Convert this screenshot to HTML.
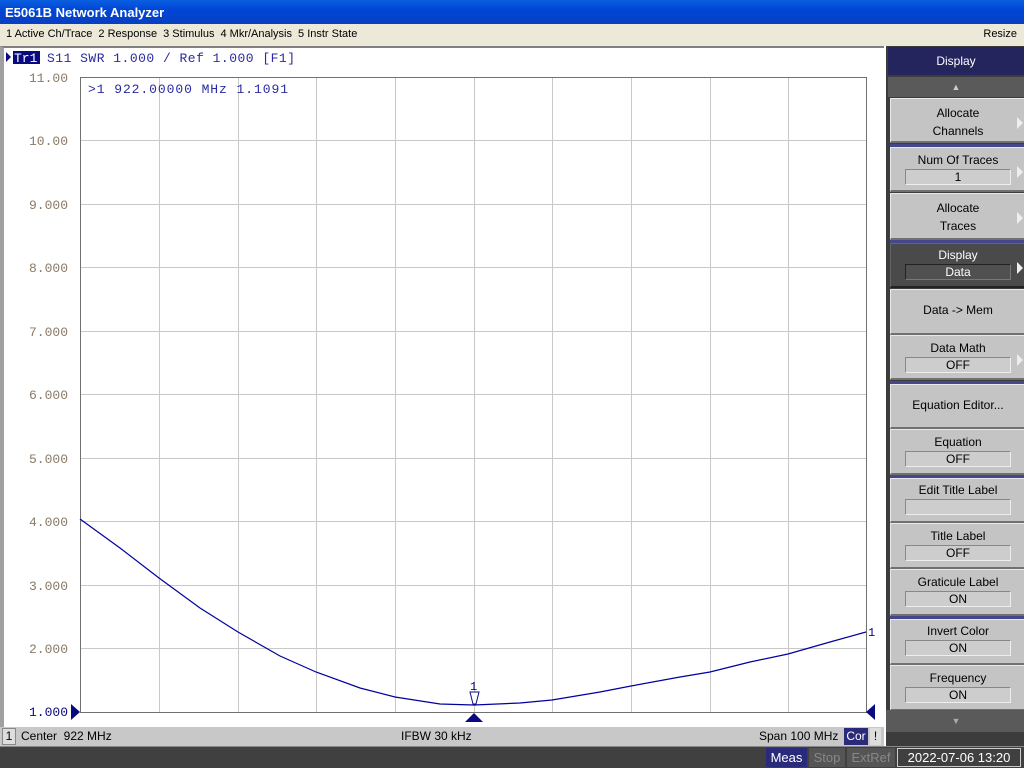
<!DOCTYPE html><html><head><style>
*{margin:0;padding:0;box-sizing:border-box}
body{width:1024px;height:768px;overflow:hidden;background:#ece9d8;font-family:"Liberation Sans",sans-serif;position:relative}
.a{position:absolute}
#title{left:0;top:0;width:1024px;height:24px;background:linear-gradient(#0a5fe0,#0046d5 40%,#0a3fc0);color:#fff;font-weight:bold;font-size:13px;line-height:25px;padding-left:5px}
#menu{left:0;top:24px;width:1024px;height:21px;background:#ece9d8;font-size:11px;line-height:21px;color:#000}
#menu span{margin-left:6px;margin-right:0}
#chart{left:0;top:46px;width:885px;height:682px;background:#fff;border-left:4px solid #a0a0a0;border-top:2px solid #808080}
#sk{left:884px;top:46px;width:140px;height:700px;background:#3c3c3c;border-left:2px solid #fff}
.btn{position:absolute;left:4px;width:136px;background:#c4c4c4;border-top:1px solid #e8e8e8;border-left:1px solid #e8e8e8;border-bottom:2px solid #707070;border-right:1px solid #808080;font-size:12px;color:#000;text-align:center}
.v{margin:2px auto 0;width:106px;height:16px;background:#cdcdcd;border:1px solid #888;border-right-color:#eee;border-bottom-color:#eee;line-height:14px}
.arr{position:absolute;right:2px;top:18px;width:0;height:0;border-left:6px solid #eee;border-top:6px solid transparent;border-bottom:6px solid transparent}
.sep{position:absolute;left:4px;width:136px;height:3px;background:#46468a}
#stat{left:0;top:727px;width:885px;height:19px;background:#c8c8c8;font-size:12px;line-height:19px}
#bot{left:0;top:746px;width:1024px;height:22px;background:#404040;border-top:1px solid #888}
</style></head><body>
<div id="title" class="a">E5061B Network Analyzer</div>
<div id="menu" class="a"><span>1 Active Ch/Trace</span><span>2 Response</span><span>3 Stimulus</span><span>4 Mkr/Analysis</span><span>5 Instr State</span><span style="position:absolute;right:7px">Resize</span></div>
<div id="chart" class="a"></div>
<svg class="a" style="left:0;top:46px" width="885" height="682" viewBox="0 46 885 682">
<g stroke="#c8c8c8" stroke-width="1">
<line x1="80" y1="140.5" x2="866" y2="140.5"/><line x1="80" y1="204.5" x2="866" y2="204.5"/><line x1="80" y1="267.5" x2="866" y2="267.5"/><line x1="80" y1="331.5" x2="866" y2="331.5"/><line x1="80" y1="394.5" x2="866" y2="394.5"/><line x1="80" y1="458.5" x2="866" y2="458.5"/><line x1="80" y1="521.5" x2="866" y2="521.5"/><line x1="80" y1="585.5" x2="866" y2="585.5"/><line x1="80" y1="648.5" x2="866" y2="648.5"/>
<line x1="159.5" y1="77" x2="159.5" y2="712"/><line x1="238.5" y1="77" x2="238.5" y2="712"/><line x1="316.5" y1="77" x2="316.5" y2="712"/><line x1="395.5" y1="77" x2="395.5" y2="712"/><line x1="474.5" y1="77" x2="474.5" y2="712"/><line x1="552.5" y1="77" x2="552.5" y2="712"/><line x1="631.5" y1="77" x2="631.5" y2="712"/><line x1="710.5" y1="77" x2="710.5" y2="712"/><line x1="788.5" y1="77" x2="788.5" y2="712"/>
</g>
<rect x="80.5" y="77.5" width="786" height="635" fill="none" stroke="#707070"/>
<polyline fill="none" stroke="#0000a0" stroke-width="1.2" points="80,519 120,548 159,578 200,608 238,632 280,656 316,672 360,688 395,697 440,704 474,705 520,703 552,700 600,692 631,686 680,677 710,672 750,662 788,654 830,642 866,632"/>
<g fill="#0a0a80"><polygon points="71,704 80,712 71,720"/><polygon points="875,704 866,712 875,720"/><polygon points="465,722 474,713 483,722"/></g>
<polygon points="470,692 479,692 476,704 473,704" fill="#fff" stroke="#0a0a80"/>
<text x="470" y="690" font-family="Liberation Mono" font-size="12" fill="#0a0a80">1</text>
<text x="868" y="636" font-family="Liberation Mono" font-size="12" fill="#0a0a80">1</text>
<g font-family="Liberation Mono" font-size="13" fill="#8a7a66" text-anchor="end">
<text x="68" y="82">11.00</text><text x="68" y="145">10.00</text><text x="68" y="209">9.000</text><text x="68" y="272">8.000</text><text x="68" y="336">7.000</text><text x="68" y="399">6.000</text><text x="68" y="463">5.000</text><text x="68" y="526">4.000</text><text x="68" y="590">3.000</text><text x="68" y="653">2.000</text><text x="68" y="716" fill="#0a0a80">1.000</text></g>
<polygon points="6,52 11,57 6,62" fill="#0a0a80"/>
<rect x="13" y="51" width="27" height="13" fill="#0a0a80"/>
<g font-family="Liberation Mono" font-size="13" fill="#2a2aa0" xml:space="preserve"><text x="14" y="62" fill="#fff">Tr1</text><text x="47" y="62" textLength="248">S11 SWR 1.000 / Ref 1.000  [F1]</text>
<text x="88" y="93" textLength="200">&gt;1  922.00000 MHz  1.1091</text></g>
</svg>
<div id="stat" class="a"><span style="position:absolute;left:2px;top:1px;height:17px;width:14px;background:#ddd;border:1px solid #888;line-height:15px;text-align:center">1</span><span style="position:absolute;left:21px">Center&nbsp; 922 MHz</span><span style="position:absolute;left:401px">IFBW 30 kHz</span><span style="position:absolute;left:759px">Span 100 MHz</span><span style="position:absolute;left:844px;top:1px;height:17px;width:24px;background:#2a2a7a;color:#fff;line-height:17px;text-align:center">Cor</span><span style="position:absolute;left:870px;top:1px;height:17px;width:11px;background:#ddd;line-height:17px;text-align:center">!</span></div>
<div id="sk" class="a">
<div class="a" style="left:2px;top:1px;width:136px;height:28px;background:#25255e;color:#fff;font-size:12px;line-height:28px;text-align:center">Display</div>
<div class="a" style="left:2px;top:31px;width:136px;height:20px;background:#5a5a5a;color:#ccc;font-size:9px;line-height:20px;text-align:center">▲</div>
<div class="btn" style="top:52px;height:45px;line-height:18px;padding-top:5px">Allocate<br>Channels<i class="arr"></i></div>
<div class="sep" style="top:98px"></div>
<div class="btn" style="top:101px;height:45px;padding-top:5px">Num Of Traces<div class="v">1</div><i class="arr"></i></div>
<div class="btn" style="top:147px;height:47px;line-height:18px;padding-top:5px">Allocate<br>Traces<i class="arr"></i></div>
<div class="sep" style="top:194px"></div>
<div class="btn" style="top:197px;height:45px;padding-top:4px;background:#4a4a4a;color:#fff;border-color:#666 #333 #222 #666">Display<div class="v" style="background:#505050;border-color:#222 #777 #777 #222">Data</div><i class="arr"></i></div>
<div class="btn" style="top:243px;height:46px;line-height:40px">Data -&gt; Mem</div>
<div class="btn" style="top:289px;height:45px;padding-top:5px">Data Math<div class="v">OFF</div><i class="arr"></i></div>
<div class="sep" style="top:335px"></div>
<div class="btn" style="top:338px;height:45px;line-height:40px">Equation Editor...</div>
<div class="btn" style="top:383px;height:46px;padding-top:5px">Equation<div class="v">OFF</div></div>
<div class="sep" style="top:429px"></div>
<div class="btn" style="top:432px;height:45px;padding-top:4px">Edit Title Label<div class="v"></div></div>
<div class="btn" style="top:477px;height:46px;padding-top:5px">Title Label<div class="v">OFF</div></div>
<div class="btn" style="top:523px;height:47px;padding-top:5px">Graticule Label<div class="v">ON</div></div>
<div class="sep" style="top:570px"></div>
<div class="btn" style="top:573px;height:46px;padding-top:4px">Invert Color<div class="v">ON</div></div>
<div class="btn" style="top:619px;height:46px;padding-top:5px">Frequency<div class="v">ON</div></div>
<div class="a" style="left:0;top:664px;width:140px;height:22px;background:#5a5a5a;color:#aaa;font-size:9px;line-height:22px;text-align:center">▼</div>
</div>
<div id="bot" class="a">
<span class="a" style="left:766px;top:1px;width:41px;height:19px;background:#2a2a7a;color:#fff;font-size:13px;line-height:19px;text-align:center">Meas</span>
<span class="a" style="left:809px;top:1px;width:36px;height:19px;background:#555;color:#888;font-size:13px;line-height:19px;text-align:center">Stop</span>
<span class="a" style="left:847px;top:1px;width:48px;height:19px;background:#555;color:#888;font-size:13px;line-height:19px;text-align:center">ExtRef</span>
<span class="a" style="left:897px;top:1px;width:124px;height:19px;border:1px solid #ccc;color:#fff;font-size:13px;line-height:17px;text-align:center">2022-07-06 13:20</span>
</div>
</body></html>
